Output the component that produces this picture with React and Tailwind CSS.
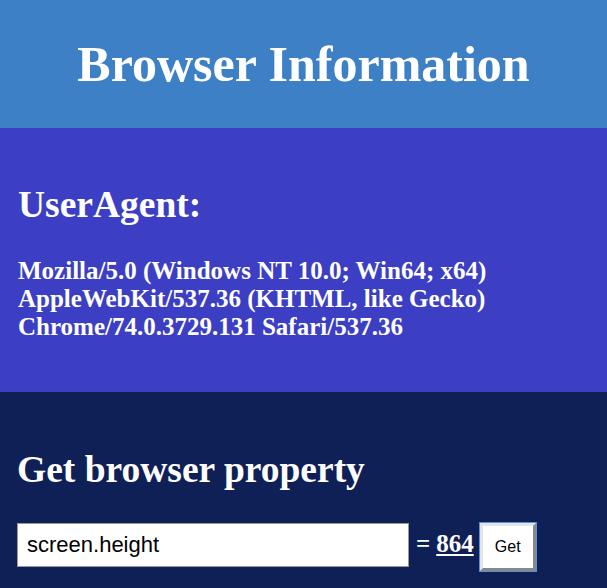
export default function App() {
  const serif = { fontFamily: '"Liberation Serif", "Times New Roman", serif' };
  const sans = { fontFamily: '"Liberation Sans", Arial, sans-serif' };
  return (
    <div className="w-[607px] h-[588px] overflow-hidden text-white" style={serif}>
      <header className="h-[128px] bg-[#3d80c6] flex items-center justify-center">
        <h1 className="text-[50px] leading-[56px] font-bold m-0">Browser Information</h1>
      </header>
      <section className="h-[264px] bg-[#3c3ec4] pt-[55px] px-[18px]">
        <h2 className="text-[37.5px] leading-[44px] font-bold">UserAgent:</h2>
        <p className="mt-[30px] text-[25px] leading-[28px] font-bold">
          Mozilla/5.0 (Windows NT 10.0; Win64; x64)
          <br />
          AppleWebKit/537.36 (KHTML, like Gecko)
          <br />
          Chrome/74.0.3729.131 Safari/537.36
        </p>
      </section>
      <section className="h-[196px] bg-[#0f2057] pt-[56px] px-[17px]">
        <h2 className="text-[37.5px] leading-[44px] font-bold">Get browser property</h2>
        <div className="mt-[31px] flex items-baseline">
          <input
            readOnly
            value="screen.height"
            className="w-[392px] h-[44px] bg-white border border-[#999] px-[9px] text-[22px] text-black outline-none"
            style={sans}
          />
          <span className="ml-[7px] text-[25px] font-bold">=</span>
          <span className="ml-[6px] text-[25px] font-bold underline">864</span>
          <button
            className="ml-[6px] w-[56px] h-[48px] bg-white text-black text-[16px] border-[3px] border-t-[#e5e5e5] border-l-[#e5e5e5] border-r-[#888] border-b-[#888] outline outline-1 outline-[#5b8fd6]"
            style={sans}
          >
            Get
          </button>
        </div>
      </section>
    </div>
  );
}
